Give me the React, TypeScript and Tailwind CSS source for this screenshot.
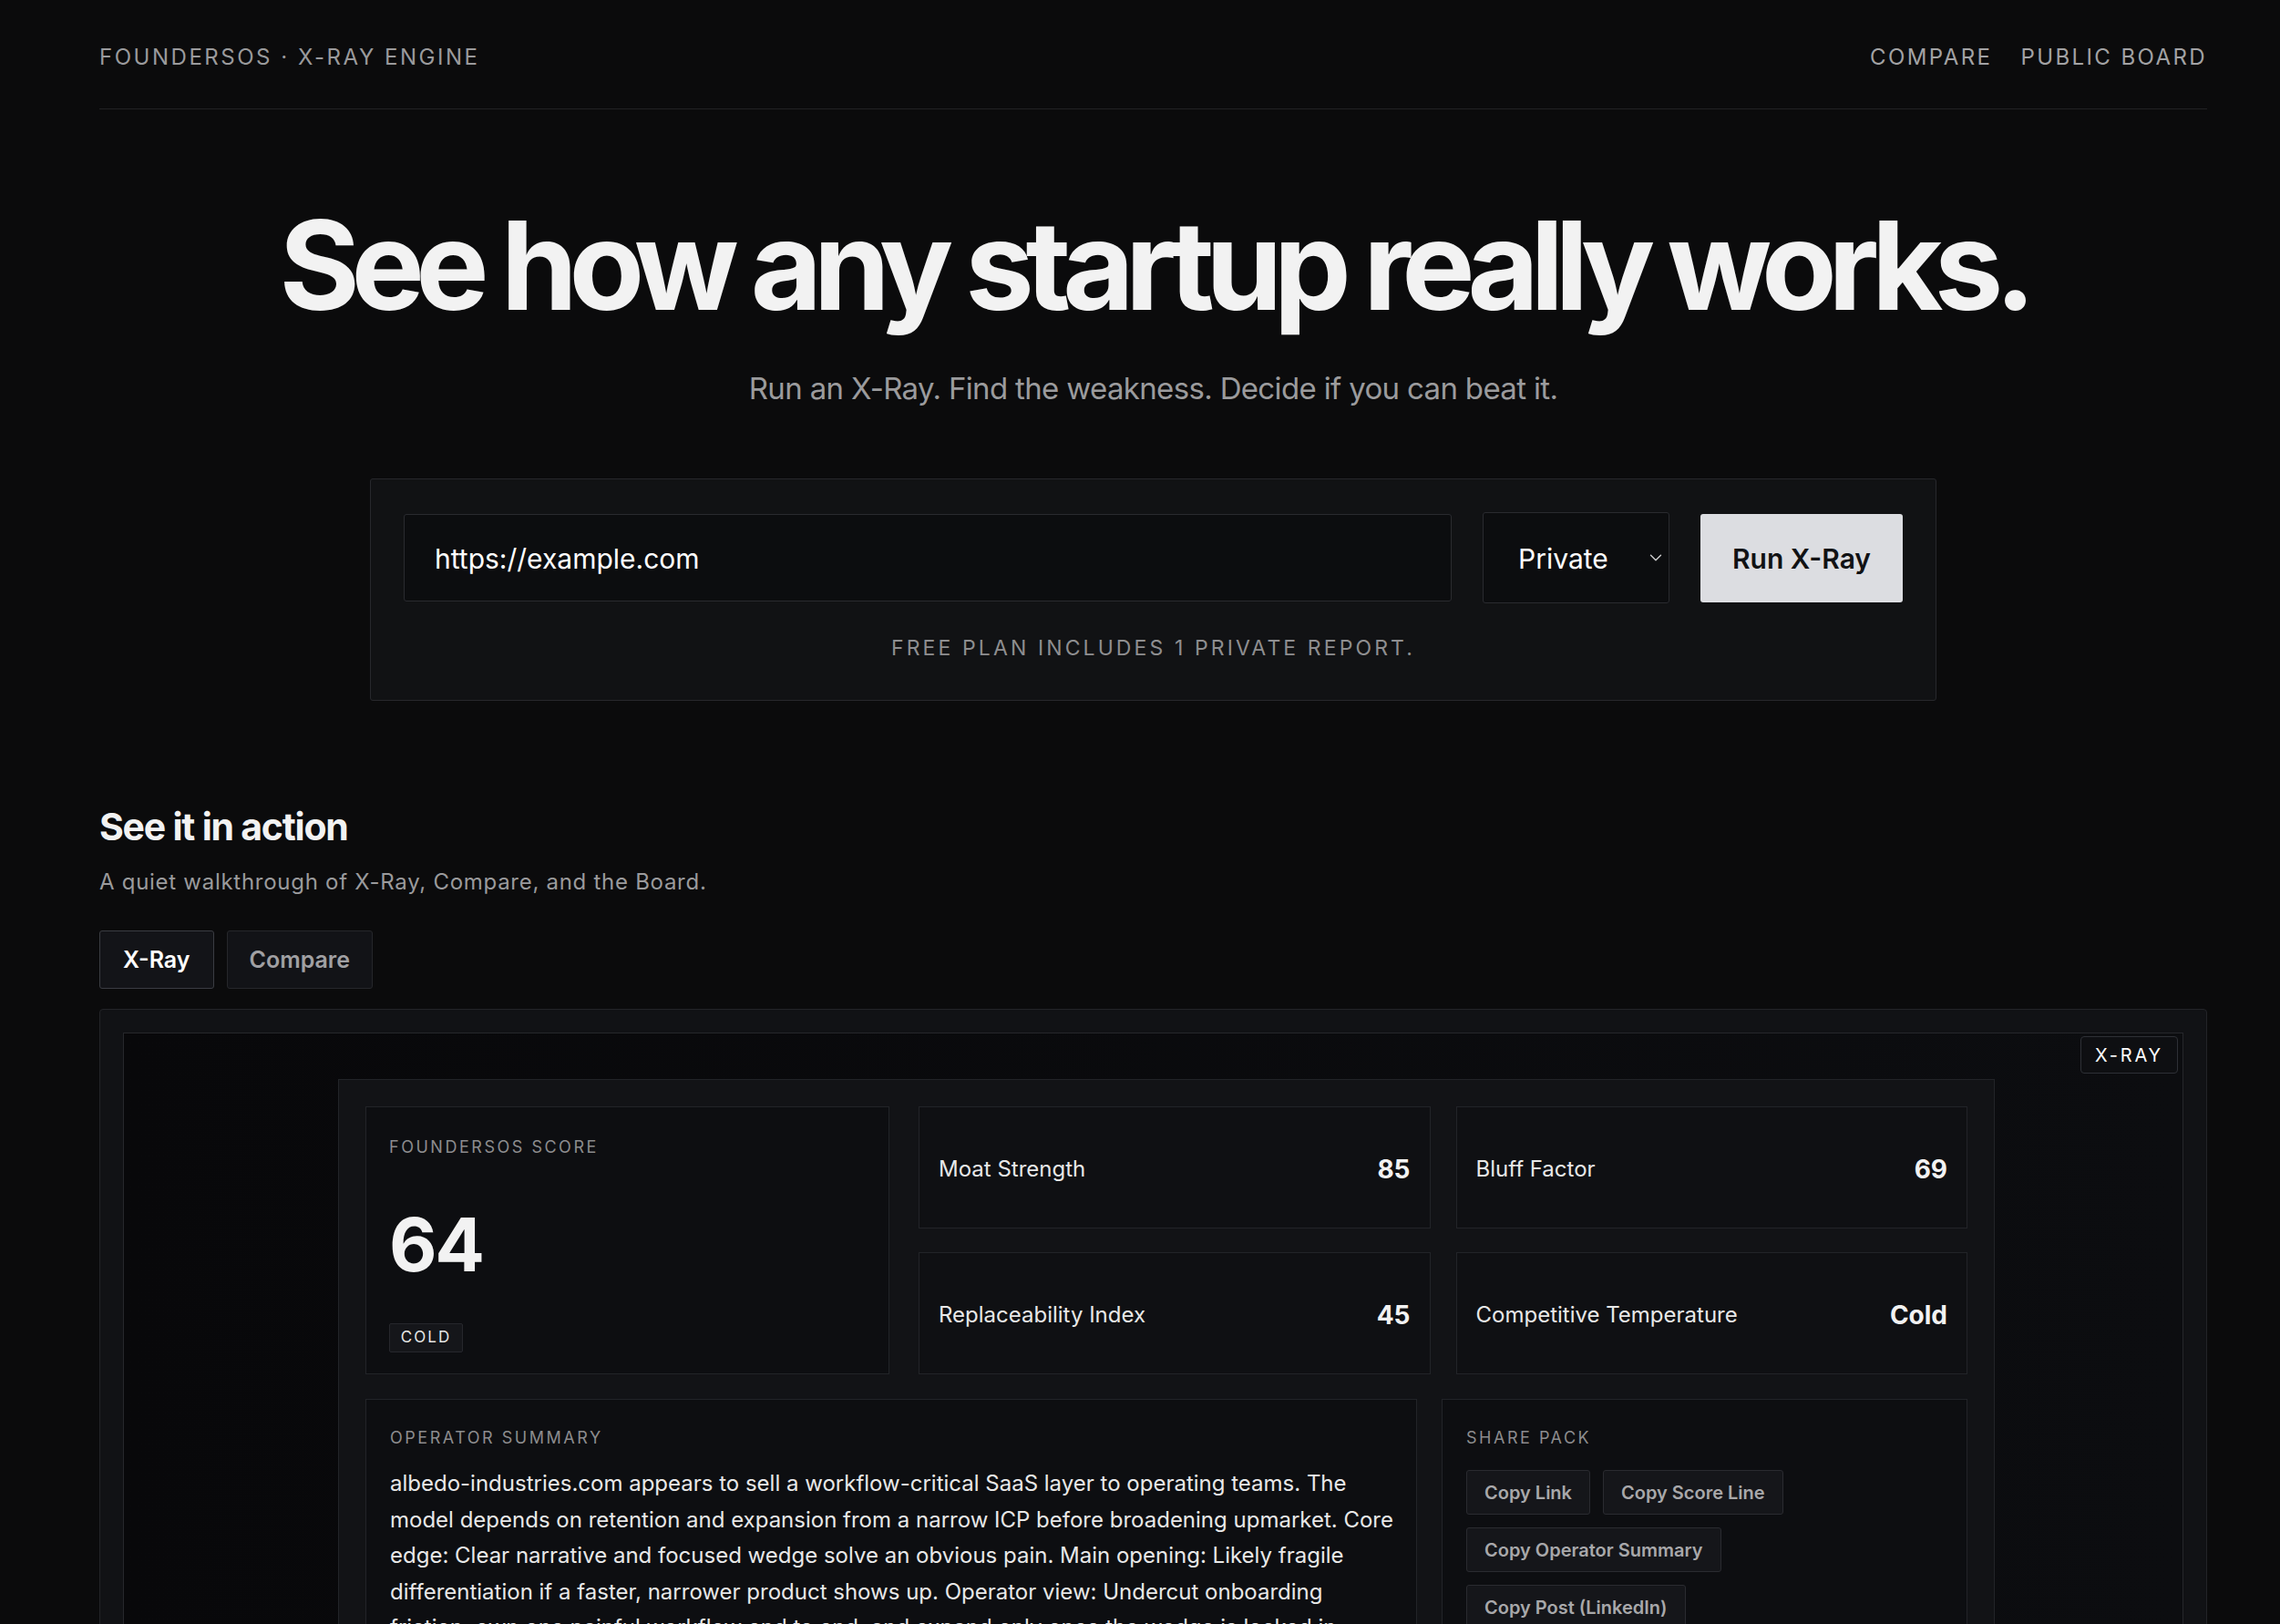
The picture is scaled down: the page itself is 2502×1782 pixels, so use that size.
import React from 'react';
import { ChevronDown } from 'lucide-react';

const metrics = [
  { label: 'Moat Strength', value: '85' },
  { label: 'Bluff Factor', value: '69' },
  { label: 'Replaceability Index', value: '45' },
  { label: 'Competitive Temperature', value: 'Cold' },
];

const shareButtons = ['Copy Link', 'Copy Score Line', 'Copy Operator Summary', 'Copy Post (LinkedIn)'];

const summary =
  'albedo-industries.com appears to sell a workflow-critical SaaS layer to operating teams. The model depends on retention and expansion from a narrow ICP before broadening upmarket. Core edge: Clear narrative and focused wedge solve an obvious pain. Main opening: Likely fragile differentiation if a faster, narrower product shows up. Operator view: Undercut onboarding friction, own one painful workflow end to end, and expand only once the wedge is locked in.';

export default function App() {
  return (
    <div className="h-[1782px] overflow-hidden bg-[#0b0b0c] text-white font-[family-name:Inter,'Noto_Sans',sans-serif]">
      <div className="pl-[109px] pr-[80px]">
        {/* top bar */}
        <header className="flex items-center justify-between h-[120px] pt-[6px] border-b border-[#222224]">
          <div className="text-[24px] leading-[35px] tracking-[0.105em] text-[#9a9a9c]">FOUNDERSOS · X-RAY ENGINE</div>
          <nav className="flex gap-[31px] text-[24px] leading-[35px] tracking-[0.1em] text-[#a2a2a4]">
            <span>COMPARE</span>
            <span>PUBLIC BOARD</span>
          </nav>
        </header>

        {/* hero */}
        <h1 className="mt-[104px] text-center text-[135px] leading-[135px] font-bold tracking-[-0.07em] text-[#f2f2f2]">
          See how any startup really works.
        </h1>
        <p className="mt-[42px] text-center text-[33px] leading-[50px] tracking-[-0.02em] text-[#9b9b9d]">
          Run an X-Ray. Find the weakness. Decide if you can beat it.
        </p>

        <div className="mt-[74px] mx-auto w-[1719px] border border-[#27282c] bg-[#111214] rounded-[3px] px-[36px] pt-[36px] pb-[41px]">
          <div className="flex items-center gap-[34px]">
            <input
              readOnly
              value="https://example.com"
              className="flex-1 min-w-0 h-[96px] border border-[#2a2b2f] bg-[#0c0d0f] rounded-[3px] px-[33px] pt-[2px] text-[30px] text-white outline-none"
            />
            <div className="w-[205px] h-[100px] border border-[#2a2b2f] bg-[#0c0d0f] rounded-[3px] flex items-center justify-between pl-[38px] pr-[3px] text-[30px] text-white">
              <span className="pt-[2px]">Private</span>
              <ChevronDown className="w-[22px] h-[22px] text-[#cfcfcf]" strokeWidth={1.5} />
            </div>
            <button className="w-[222px] h-[97px] bg-[#dcdde1] rounded-[3px] pt-[2px] text-[30px] font-semibold text-[#111214]">
              Run X-Ray
            </button>
          </div>
          <p className="mt-[33px] text-center text-[23px] leading-[32px] tracking-[0.135em] text-[#8e8e90]">
            FREE PLAN INCLUDES 1 PRIVATE REPORT.
          </p>
        </div>

        {/* demo */}
        <h2 className="mt-[114px] text-[41px] leading-[49px] font-bold tracking-[-0.03em] text-[#f2f2f2]">See it in action</h2>
        <p className="mt-[18px] text-[24px] leading-[36px] tracking-[0.03em] text-[#9a9a9c]">
          A quiet walkthrough of X-Ray, Compare, and the Board.
        </p>

        <div className="mt-[35px] flex gap-[14px]">
          <button className="h-[64px] pt-[2px] px-[25px] border border-[#3a3c42] bg-[#131418] rounded-[3px] text-[25px] font-semibold text-white">
            X-Ray
          </button>
          <button className="h-[64px] pt-[2px] px-[24px] border border-[#26272b] bg-[#121317] rounded-[3px] text-[25px] font-semibold text-[#a0a0a3]">
            Compare
          </button>
        </div>

        <div className="mt-[22px] border border-[#232428] bg-[#111215] rounded-[4px] p-[25px]">
          <div className="relative border border-[#26272b] bg-gradient-to-r from-[#08080a] to-[#0c0d10] pt-[50px] pl-[235px] pb-[60px]">
            <div className="absolute top-[3px] right-[5px] h-[41px] px-[15px] flex items-center border border-[#2e3036] bg-[#0e0f12] rounded-[4px] text-[20px] tracking-[0.14em] text-white">
              X-RAY
            </div>

            <div className="w-[1818px] border border-[#222428] bg-[#121316] p-[29px]">
              <div className="grid grid-cols-[575px_1fr] gap-[32px]">
                <div className="h-[294px] border border-[#222428] bg-[#0d0e11] pl-[25px] pt-[32px]">
                  <div className="text-[18px] leading-[24px] tracking-[0.14em] text-[#8c8c8e]">FOUNDERSOS SCORE</div>
                  <div className="mt-[55px] text-[81px] leading-[81px] font-bold tracking-[-0.03em] text-[#f2f2f2]">64</div>
                  <div className="mt-[45px] w-[81px] h-[32px] flex items-center justify-center border border-[#26272c] bg-[#15161a] rounded-[2px] text-[17px] tracking-[0.12em] text-[#e6e6e6]">
                    COLD
                  </div>
                </div>
                <div className="grid grid-cols-2 gap-x-[28px] gap-y-[26px]">
                  {metrics.map((m) => (
                    <div
                      key={m.label}
                      className="h-[134px] border border-[#222428] bg-[#0f1013] flex items-center justify-between px-[21px] pt-[3px]"
                    >
                      <span className="text-[24px] text-[#e8e8e8]">{m.label}</span>
                      <span className="text-[28px] font-bold text-[#f2f2f2]">{m.value}</span>
                    </div>
                  ))}
                </div>
              </div>

              <div className="mt-[27px] grid grid-cols-[1154px_1fr] gap-[27px]">
                <div className="border border-[#222428] bg-[#0d0e11] pl-[26px] pr-[18px] pt-[30px] pb-[30px]">
                  <div className="text-[18px] leading-[24px] tracking-[0.14em] text-[#8c8c8e]">OPERATOR SUMMARY</div>
                  <p className="mt-[18px] text-[24px] leading-[39.5px] text-[#e8e8e8]">{summary}</p>
                </div>
                <div className="border border-[#222428] bg-[#0d0e11] px-[26px] pt-[30px] pb-[30px]">
                  <div className="text-[18px] leading-[24px] tracking-[0.14em] text-[#8c8c8e]">SHARE PACK</div>
                  <div className="mt-[23px] flex flex-wrap gap-[14px]">
                    {shareButtons.map((b) => (
                      <button
                        key={b}
                        className="h-[49px] px-[19px] border border-[#2a2b30] bg-[#15161a] rounded-[3px] text-[20px] font-semibold text-[#a8a8aa]"
                      >
                        {b}
                      </button>
                    ))}
                  </div>
                </div>
              </div>
            </div>
          </div>
        </div>
      </div>
    </div>
  );
}
